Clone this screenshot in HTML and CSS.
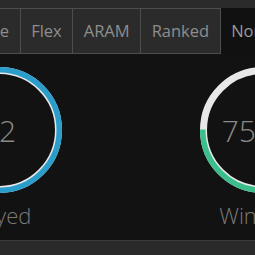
FILE: index.html
```html
<!DOCTYPE html>
<html lang="en">
<head>
    <meta charset="UTF-8">
    <meta name="viewport" content="width=device-width, initial-scale=1.0">
    <title>Match Stats</title>
    <link rel="stylesheet" href="styles.css">
</head>
<body>
    <div class="topbar"></div>
    <div class="tabs">
        <div class="tab">Home</div>
        <div class="tab">Flex</div>
        <div class="tab">ARAM</div>
        <div class="tab">Ranked</div>
        <div class="tab active">Normal</div>
    </div>

    <div class="stats">
        <div class="stat">
            <div class="ring">
                <svg width="126" height="126" viewBox="0 0 126 126">
                    <circle cx="63" cy="63" r="59.5" fill="none" stroke="#e8e8e8" stroke-width="7"/>
                    <circle cx="63" cy="63" r="60.25" fill="none" stroke="#2a9dcb" stroke-width="5.5"/>
                </svg>
                <span class="value">12</span>
            </div>
            <div class="label">Played</div>
        </div>
        <div class="stat">
            <div class="ring">
                <svg width="126" height="126" viewBox="0 0 126 126">
                    <circle cx="63" cy="63" r="59.5" fill="none" stroke="#e8e8e8" stroke-width="7"/>
                    <!-- 75% of circumference, starting at 12 o'clock -->
                    <circle cx="63" cy="63" r="60.25" fill="none" stroke="#3cbd8c" stroke-width="5.5"
                            stroke-dasharray="283.9 378.6" transform="rotate(-90 63 63)"/>
                </svg>
                <span class="value">75.0%</span>
            </div>
            <div class="label">Win Rate</div>
        </div>
    </div>

    <div class="footer"></div>
</body>
</html>
```

FILE: styles.css
```css
body {
    margin: 0;
    background-color: #121212;
    font-family: "Open Sans", sans-serif;
    overflow: hidden;
    height: 255px;
    display: flex;
    flex-direction: column;
}
.topbar {
    height: 8px;
    background-color: #2b2b2b;
}
.tabs {
    display: flex;
    margin-left: -48px;
    background-color: #2b2b2b;
}
.tab {
    flex: none;
    padding: 0 10.5px;
    height: 44px;
    line-height: 44px;
    font-size: 16.5px;
    color: #8e8e8e;
    border-top: 1px solid #4d4d4d;
    border-bottom: 1px solid #4d4d4d;
    border-right: 1px solid #4d4d4d;
}
.tab.active {
    background-color: #111111;
    border-color: transparent;
    color: #9a9a9a;
}
.stats {
    display: flex;
    gap: 138px;
    margin-left: -64px;
    padding-top: 13px;
}
.stat {
    width: 126px;
    flex: none;
    display: flex;
    flex-direction: column;
    align-items: center;
}
.ring {
    display: grid;
    place-items: center;
}
.ring svg,
.ring .value {
    grid-area: 1 / 1;
}
.ring svg {
    display: block;
}
.value {
    font-size: 30px;
    font-weight: 300;
    color: #8a8a8a;
    white-space: nowrap;
}
.label {
    margin-top: 7px;
    font-size: 22px;
    font-weight: 300;
    color: #7a7a7a;
    white-space: nowrap;
}
.footer {
    flex: 1;
    margin-top: 10px;
    background-color: #2a2a2a;
    border-top: 1px solid #3c3c3c;
}
```
